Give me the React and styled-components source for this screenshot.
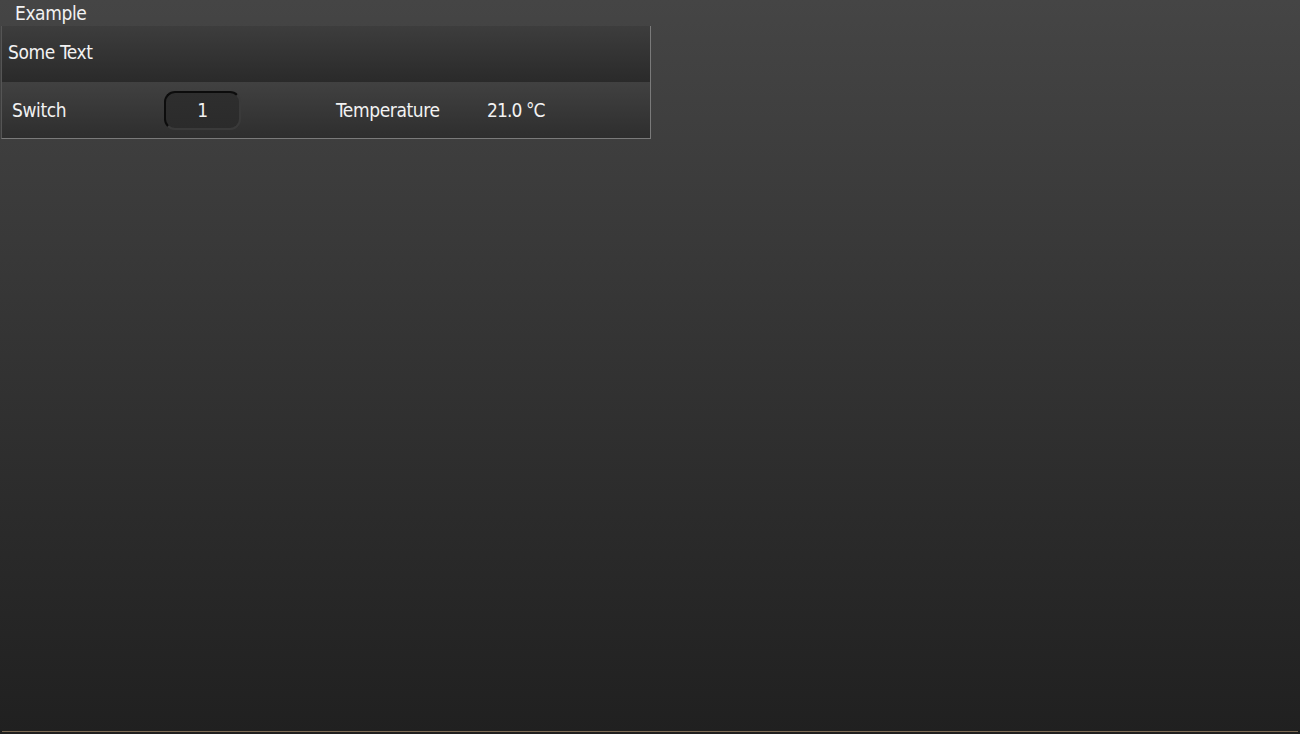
import React from "react";
import styled, { createGlobalStyle } from "styled-components";

const GlobalStyle = createGlobalStyle`
  html, body {
    margin: 0;
    padding: 0;
    height: 100%;
  }
  body {
    font-family: "DejaVu Sans Condensed", "DejaVu Sans", sans-serif;
    color: #f2f2f2;
  }
`;

const Page = styled.div`
  height: 734px;
  box-sizing: border-box;
  background: linear-gradient(to bottom, #454545 0%, #202020 100%);
  display: flex;
  flex-direction: column;
  position: relative;
`;

const Title = styled.div`
  height: 26px;
  padding-left: 15px;
  font-size: 19px;
  line-height: 27px;
  letter-spacing: -0.4px;
`;

const Panel = styled.div`
  width: 650px;
  margin-left: 1px;
  border-left: 1px solid #555;
  border-right: 1px solid #7a7a7a;
  border-bottom: 1px solid #7a7a7a;
  box-sizing: border-box;
`;

const HeaderRow = styled.div`
  height: 56px;
  display: flex;
  align-items: center;
  padding-left: 6px;
  padding-bottom: 4px;
  box-sizing: border-box;
  background: linear-gradient(to bottom, #3d3d3d, #2a2a2a);
  font-size: 19px;
  letter-spacing: -0.4px;
`;

const Row = styled.div`
  height: 56px;
  display: grid;
  grid-template-columns: 152px 172px 151px 1fr;
  align-items: center;
  padding-left: 10px;
  background: linear-gradient(to bottom, #414141, #2e2e2e);
  font-size: 19px;
  letter-spacing: -0.4px;
`;

const Label = styled.span`
  letter-spacing: ${(p) => (p.$tight ? "-0.9px" : "inherit")};
`;

const ValueButton = styled.div`
  width: 77px;
  height: 39px;
  box-sizing: border-box;
  border-radius: 11px;
  border: 2px solid #0c0c0c;
  border-right-color: #3a3a3a;
  border-bottom-color: #3a3a3a;
  background: linear-gradient(to bottom, #2e2e2e, #2b2b2b);
  display: flex;
  align-items: center;
  justify-content: center;
  font-size: 19px;
`;

const BottomLine = styled.div`
  position: absolute;
  left: 2px;
  right: 2px;
  bottom: 2px;
  height: 1px;
  background: #7c6b55;
`;

export default function App() {
  return (
    <>
      <GlobalStyle />
      <Page>
        <Title>Example</Title>
        <Panel>
          <HeaderRow>Some Text</HeaderRow>
          <Row>
            <Label>Switch</Label>
            <ValueButton>1</ValueButton>
            <Label>Temperature</Label>
            <Label $tight>21.0 °C</Label>
          </Row>
        </Panel>
        <BottomLine />
      </Page>
    </>
  );
}
